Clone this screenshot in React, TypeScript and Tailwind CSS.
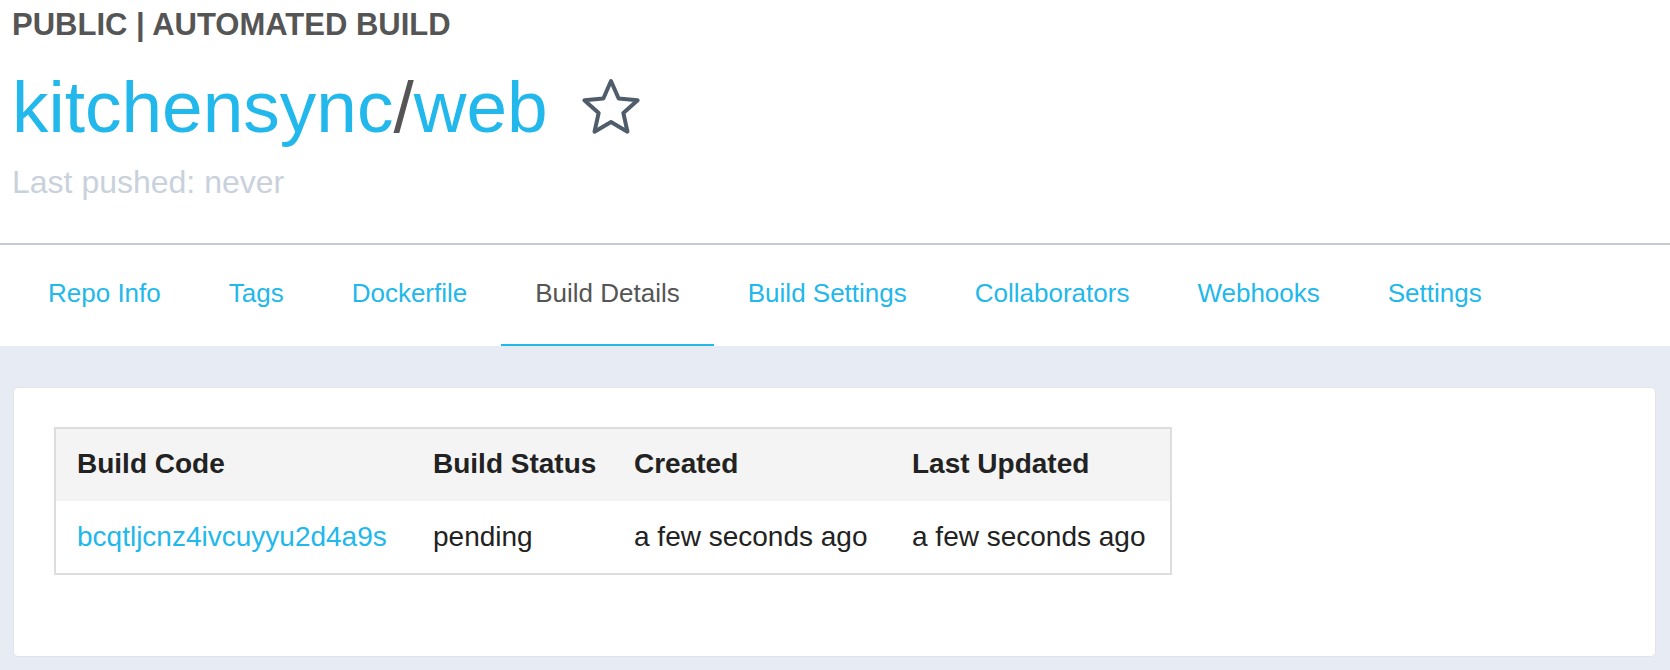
const tabs = [
  "Repo Info",
  "Tags",
  "Dockerfile",
  "Build Details",
  "Build Settings",
  "Collaborators",
  "Webhooks",
  "Settings",
];

const builds = [
  {
    code: "bcqtljcnz4ivcuyyu2d4a9s",
    status: "pending",
    created: "a few seconds ago",
    updated: "a few seconds ago",
  },
];

const StarIcon = () => (
  <svg width="62" height="60" viewBox="0 0 62 60" className="ml-[32px] shrink-0">
    <polygon
      points="31,4 38.64,21.48 57.63,23.35 43.36,36.02 47.46,54.65 31,45 14.54,54.65 18.64,36.02 4.37,23.35 23.36,21.48"
      fill="none"
      stroke="#4f5c6b"
      strokeWidth="4"
      strokeLinejoin="round"
    />
  </svg>
);

export default function App() {
  return (
    <div className="min-h-screen bg-[#e7ecf4] font-['Liberation_Sans',Arial,sans-serif]">
      {/* Repo header */}
      <header className="bg-white pl-[12px] pt-[7px] pb-[43px] border-b-2 border-[#c3cad2]">
        <div className="text-[31px] leading-[36px] font-bold text-[#555]">PUBLIC | AUTOMATED BUILD</div>
        <div className="mt-[24px] flex items-center">
          <h1 className="text-[73px] leading-[80px] text-[#22b8eb]">
            kitchensync<span className="text-[#555]">/</span>web
          </h1>
          <StarIcon />
        </div>
        <div className="mt-[17px] text-[32px] leading-[36px] text-[#c9d1dc]">Last pushed: never</div>
      </header>

      {/* Tabs */}
      <nav className="bg-white flex pl-[14px]">
        {tabs.map((t) => {
          const active = t === "Build Details";
          return (
            <a
              key={t}
              href="#"
              className={`px-[34px] pt-[33px] pb-[36px] text-[26px] leading-[30px] border-b-2 ${
                active ? "text-[#555] border-[#22b8eb]" : "text-[#22b8eb] border-transparent"
              }`}
            >
              {t}
            </a>
          );
        })}
      </nav>

      {/* Content */}
      <main className="pt-[41px] pl-[13px] pr-[14px] pb-[14px]">
        <div className="bg-white border border-[#e1e4e8] rounded-[5px] pt-[39px] pl-[40px] pr-[40px] pb-[81px]">
          <table className="w-[1118px] table-fixed border-2 border-[#dddddd] border-collapse text-[28px] leading-[32px] text-[#222]">
            <thead>
              <tr className="bg-[#f4f4f4] whitespace-nowrap">
                <th className="w-[357px] px-[21px] pt-[19px] pb-[21px] text-left font-bold">Build Code</th>
                <th className="w-[201px] px-[21px] pt-[19px] pb-[21px] text-left font-bold">Build Status</th>
                <th className="w-[278px] px-[21px] pt-[19px] pb-[21px] text-left font-bold">Created</th>
                <th className="px-[21px] pt-[19px] pb-[21px] text-left font-bold">Last Updated</th>
              </tr>
            </thead>
            <tbody>
              {builds.map((b) => (
                <tr key={b.code} className="whitespace-nowrap">
                  <td className="px-[21px] py-[20px]">
                    <a href="#" className="text-[#22b8eb]">{b.code}</a>
                  </td>
                  <td className="px-[21px] py-[20px]">{b.status}</td>
                  <td className="px-[21px] py-[20px]">{b.created}</td>
                  <td className="px-[21px] py-[20px]">{b.updated}</td>
                </tr>
              ))}
            </tbody>
          </table>
        </div>
      </main>
    </div>
  );
}
